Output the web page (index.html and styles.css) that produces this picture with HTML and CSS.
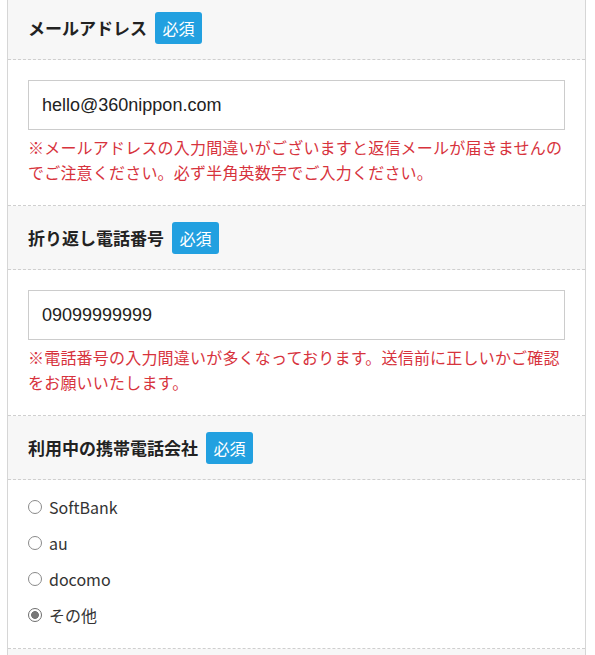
FILE: index.html
```html
<!DOCTYPE html>
<html lang="ja">
<head>
<meta charset="utf-8">
<title>お問い合わせフォーム</title>
<link rel="stylesheet" href="styles.css">
</head>
<body>
<dl class="form">
  <dt class="head"><span class="label">メールアドレス</span><span class="req">必須</span></dt>
  <dd class="body">
    <input class="field" type="text" value="hello@360nippon.com">
    <p class="note">※メールアドレスの入力間違いがございますと返信メールが届きませんのでご注意ください。必ず半角英数字でご入力ください。</p>
  </dd>
  <dt class="head"><span class="label">折り返し電話番号</span><span class="req">必須</span></dt>
  <dd class="body">
    <input class="field" type="text" value="09099999999">
    <p class="note">※電話番号の入力間違いが多くなっております。送信前に正しいかご確認をお願いいたします。</p>
  </dd>
  <dt class="head"><span class="label">利用中の携帯電話会社</span><span class="req">必須</span></dt>
  <dd class="body radios">
    <label class="opt"><input type="radio" name="carrier"><span>SoftBank</span></label>
    <label class="opt"><input type="radio" name="carrier"><span>au</span></label>
    <label class="opt"><input type="radio" name="carrier"><span>docomo</span></label>
    <label class="opt"><input type="radio" name="carrier" checked><span>その他</span></label>
  </dd>
  <dt class="head"></dt>
</dl>
</body>
</html>
```
FILE: styles.css
```css
html, body {
  margin: 0;
  padding: 0;
  background: #fff;
}
body {
  font-family: "Noto Sans CJK JP", "Noto Sans", sans-serif;
  color: #222;
}
.form {
  margin: -4px 0 0 7px;
  width: 579px;
  box-sizing: border-box;
  border-left: 1px solid #d6d6d6;
  border-right: 1px solid #d6d6d6;
}
.head {
  display: flex;
  align-items: center;
  gap: 8px;
  height: 63px;
  padding: 0 20px;
  background: #f7f7f7;
  border-bottom: 1px dashed #cfcfcf;
}
.label {
  font-size: 17px;
  font-weight: bold;
  color: #222;
}
.req {
  display: inline-block;
  height: 32px;
  line-height: 32px;
  padding: 0 7.5px;
  background: #22a0e0;
  color: #fff;
  font-size: 16px;
  border-radius: 3px;
}
.body {
  margin: 0;
  padding: 20px 20px 20px;
  border-bottom: 1px dashed #cfcfcf;
}
.field {
  display: block;
  width: 100%;
  height: 50px;
  box-sizing: border-box;
  margin: 0;
  padding: 0 13px;
  border: 1px solid #cccccc;
  border-radius: 0;
  font-family: "Liberation Sans", Arial, sans-serif;
  font-size: 18px;
  color: #222;
  background: #fff;
  outline: none;
}
.note {
  margin: 5px 0 0;
  font-size: 16px;
  line-height: 25px;
  letter-spacing: 0.2px;
  color: #d7333d;
}
.radios {
  padding: 15px 20px 9px;
}
.opt {
  display: flex;
  align-items: center;
  height: 24px;
  margin-bottom: 12px;
  font-size: 16px;
  color: #333;
}
.opt input {
  appearance: none;
  -webkit-appearance: none;
  width: 14px;
  height: 14px;
  margin: 0 7px 0 0;
  border: 1px solid #8a8a8a;
  border-radius: 50%;
  background: #fff;
  box-sizing: border-box;
}
.opt input:checked {
  border-color: #6e6e6e;
  background: radial-gradient(circle, #777 0, #777 3.6px, #fff 4.2px);
}
```
